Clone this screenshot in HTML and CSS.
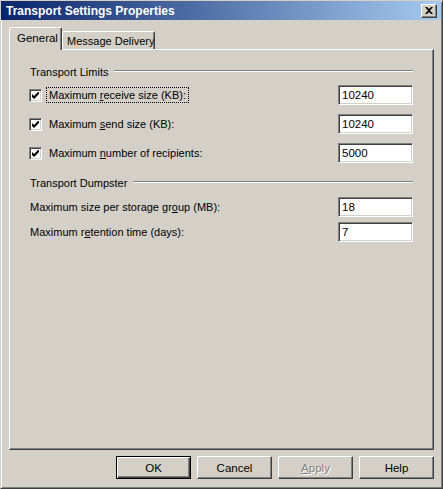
FILE: index.html
```html
<!DOCTYPE html>
<html>
<head>
<meta charset="utf-8">
<link rel="stylesheet" href="styles.css">
</head>
<body>
<div class="window">
  <div class="titlebar">
    <span class="title">Transport Settings Properties</span>
    <span class="close"><svg width="8" height="7" viewBox="0 0 8 7"><path d="M0 0h2l2 2 2-2h2L5 3.5 8 7H6L4 5 2 7H0l3-3.5z" fill="#000"/></svg></span>
  </div>
  <div class="client">
    <div class="tabs">
      <div class="tab active">General</div>
      <div class="tab">Message Delivery</div>
    </div>
    <div class="panel">
      <div class="group"><span>Transport Limits</span><i class="rule"></i></div>
      <div class="row chk first">
        <span class="box"><svg width="7" height="7" viewBox="0 0 7 7"><path d="M0 2v3l2 2 5-5V-1L2 4z" fill="#000"/></svg></span>
        <span class="lbl focus">Maximum <u>r</u>eceive size (KB):</span>
        <span class="edit">10240</span>
      </div>
      <div class="row chk">
        <span class="box"><svg width="7" height="7" viewBox="0 0 7 7"><path d="M0 2v3l2 2 5-5V-1L2 4z" fill="#000"/></svg></span>
        <span class="lbl">Maximum <u>s</u>end size (KB):</span>
        <span class="edit">10240</span>
      </div>
      <div class="row chk">
        <span class="box"><svg width="7" height="7" viewBox="0 0 7 7"><path d="M0 2v3l2 2 5-5V-1L2 4z" fill="#000"/></svg></span>
        <span class="lbl">Maximum <u>n</u>umber of recipients:</span>
        <span class="edit">5000</span>
      </div>
      <div class="group g2"><span>Transport Dumpster</span><i class="rule"></i></div>
      <div class="row plain first2">
        <span class="lbl">Maximum size per storage gr<u>o</u>up (MB):</span>
        <span class="edit">18</span>
      </div>
      <div class="row plain">
        <span class="lbl">Maximum r<u>e</u>tention time (days):</span>
        <span class="edit">7</span>
      </div>
    </div>
    <div class="buttons">
      <div class="btn default"><span>OK</span></div>
      <div class="btn"><span>Cancel</span></div>
      <div class="btn disabled"><span><u>A</u>pply</span></div>
      <div class="btn"><span>Help</span></div>
    </div>
  </div>
</div>
</body>
</html>
```

FILE: styles.css
```css
html, body {
  margin: 0;
  padding: 0;
  background: #d4d0c8;
}
body {
  font-family: "Liberation Sans", Arial, sans-serif;
  font-size: 11px;
  color: #000;
}
.window {
  width: 443px;
  height: 489px;
  box-sizing: border-box;
  background: #d4d0c8;
  border-style: solid;
  border-width: 1px;
  border-color: #d4d0c8 #404040 #404040 #d4d0c8;
  box-shadow: inset 1px 1px #fff, inset -1px -1px #808080;
  padding: 0 3px 3px 3px;
}
.titlebar {
  height: 19px;
  margin-left: -3px;
  margin-right: -2px;
  background: linear-gradient(to right, #0a246a, #a6caf0);
  display: flex;
  align-items: center;
  justify-content: space-between;
  padding-left: 5px;
  padding-right: 4px;
}
.title {
  color: #fff;
  font-weight: bold;
  font-size: 12px;
  white-space: nowrap;
}
.close {
  width: 16px;
  height: 14px;
  box-sizing: border-box;
  background: #d4d0c8;
  border-style: solid;
  border-width: 1px;
  border-color: #fff #404040 #404040 #fff;
  box-shadow: inset -1px -1px #808080;
  display: flex;
  align-items: center;
  justify-content: center;
  padding-right: 1px;
}
.close svg { display: block; }
.client {
  padding: 7px 5px 0 5px;
}
.tabs {
  display: flex;
  align-items: flex-end;
  height: 22px;
  position: relative;
  z-index: 1;
}
.tab {
  flex: none;
  height: 18px;
  box-sizing: border-box;
  border-style: solid;
  border-width: 1px 1px 0 1px;
  border-color: #fff #404040 transparent #fff;
  border-radius: 2px 2px 0 0;
  box-shadow: inset -1px 0 #808080;
  background: #d4d0c8;
  display: flex;
  align-items: center;
  white-space: nowrap;
  overflow: hidden;
  font-size: 11px;
}
.tab.active {
  height: 23px;
  margin-bottom: -1px;
  width: 53px;
  padding: 0 0 2px 7px;
  font-size: 11.5px;
}
.tab + .tab {
  width: 93px;
  padding-left: 4px;
}
.panel {
  height: 401px;
  box-sizing: border-box;
  border-style: solid;
  border-width: 1px;
  border-color: #fff #404040 #404040 #fff;
  box-shadow: inset -1px -1px #808080;
  padding: 15px 20px 0 20px;
}
.group {
  display: flex;
  align-items: center;
  height: 13px;
  gap: 6px;
}
.group span {
  white-space: nowrap;
}
.rule {
  flex: 1;
  height: 0;
  border-top: 1px solid #808080;
  border-bottom: 1px solid #fff;
  margin-top: -1px;
}
.g2 {
  margin-top: 13px;
}
.row {
  display: flex;
  align-items: center;
  height: 20px;
}
.row.chk { margin-top: 9px; }
.row.first { margin-top: 7px; }
.row.plain { margin-top: 5px; }
.row.first2 { margin-top: 8px; }
.box {
  width: 13px;
  height: 13px;
  box-sizing: border-box;
  margin-left: -1px;
  background: #fff;
  border-style: solid;
  border-width: 1px;
  border-color: #808080 #fff #fff #808080;
  box-shadow: inset 1px 1px #404040, inset -1px -1px #d4d0c8;
  display: flex;
  align-items: center;
  justify-content: center;
  margin-right: 5px;
}
.box svg { display: block; }
.lbl {
  flex: 1;
  white-space: nowrap;
  padding-left: 2px;
}
.lbl.focus {
  flex: none;
  outline: 1px dotted #000;
  outline-offset: 0;
  padding: 1px 2px 1px 2px;
  margin-right: auto;
}
.plain .lbl { padding-left: 0; }
.edit {
  width: 75px;
  height: 20px;
  box-sizing: border-box;
  background: #fff;
  border-style: solid;
  border-width: 1px;
  border-color: #808080 #fff #fff #808080;
  box-shadow: inset 1px 1px #404040, inset -1px -1px #d4d0c8;
  padding: 2px 0 0 3px;
  font-size: 11.5px;
  line-height: 15px;
}
.buttons {
  display: flex;
  justify-content: flex-end;
  gap: 6px;
  margin-top: 6px;
}
.btn {
  width: 75px;
  height: 23px;
  box-sizing: border-box;
  background: #d4d0c8;
  border-style: solid;
  border-width: 1px;
  border-color: #fff #404040 #404040 #fff;
  box-shadow: inset -1px -1px #808080;
  display: flex;
  align-items: center;
  justify-content: center;
  font-size: 11.5px;
}
.btn.default {
  border: 1px solid #000;
  box-shadow: inset 1px 1px #fff, inset -1px -1px #404040, inset -2px -2px #808080;
}
.btn.disabled span {
  color: #808080;
  text-shadow: 1px 1px #fff;
}
```
